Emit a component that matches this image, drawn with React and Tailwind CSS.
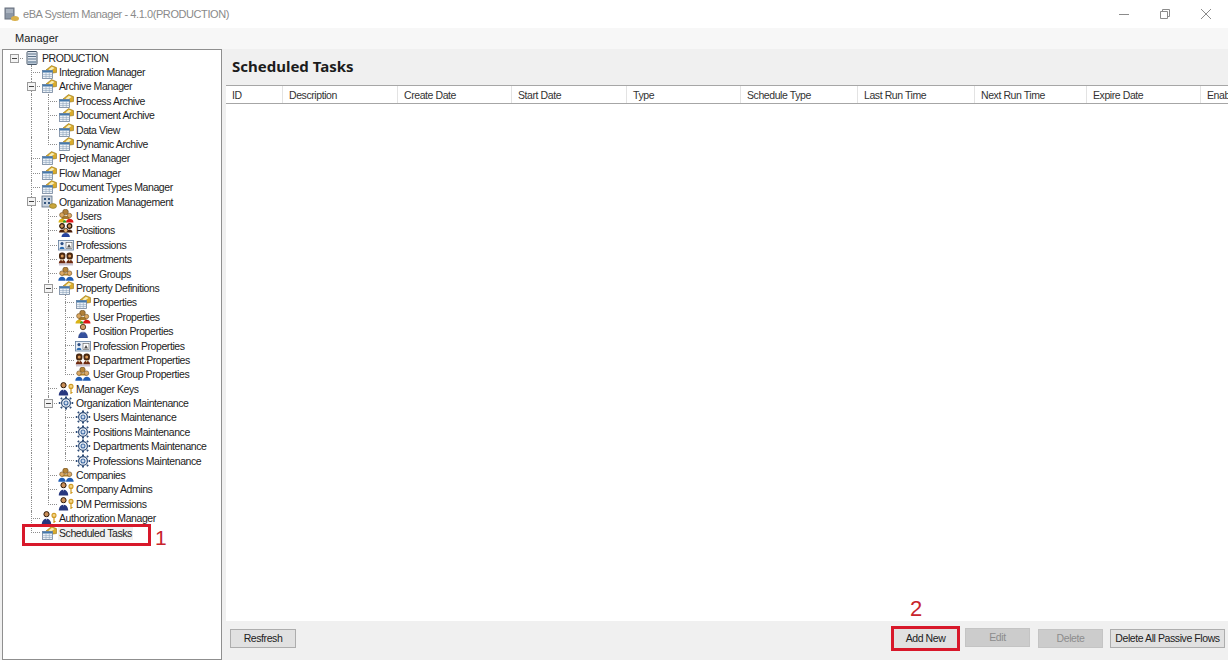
import React from "react";

const S = "[font-family:'Liberation_Sans',Arial,sans-serif]";

function Ico({ t }) {
  const base = { width: 16, height: 14, viewBox: "0 0 16 14" };
  if (t === "mgr")
    return (
      <svg {...base}>
        <path d="M5 5 L10.5 0.6 L15.5 2.6 L15.5 7.5 L12 8 Z" fill="#d9ab2c" stroke="#94741a" strokeWidth="0.6" />
        <path d="M7.5 4.4 L11 1.8 L13.6 3 L10 5.4Z" fill="#f8eeb8" />
        <rect x="1.5" y="5.5" width="10" height="8" fill="#eef3f8" stroke="#6f8299" strokeWidth="0.8" />
        <rect x="1.5" y="5.5" width="10" height="2" fill="#4579ab" />
        <path d="M1.5 9.6H11.5M1.5 11.5H11.5M5 7.5V13.5M8.3 7.5V13.5" stroke="#8fa6bd" strokeWidth="0.6" />
      </svg>
    );
  if (t === "server")
    return (
      <svg {...base}>
        <rect x="3" y="0.5" width="10" height="13" rx="1" fill="#dfe6ee" stroke="#49596b" />
        <path d="M4 3H12M4 5.5H12M4 8H12" stroke="#5a7088" />
        <rect x="4" y="10" width="8" height="2.5" fill="#8ea2b6" />
      </svg>
    );
  if (t === "org")
    return (
      <svg {...base}>
        <rect x="1" y="1" width="10" height="11" fill="#c9d3df" stroke="#5b6b80" strokeWidth="0.8" />
        <path d="M3 3h2v2H3zM7 3h2v2H7zM3 7h2v2H3zM7 7h2v2H7z" fill="#34567e" />
        <ellipse cx="12" cy="11" rx="3.5" ry="2.4" fill="#c9a53a" stroke="#86701f" strokeWidth="0.6" />
      </svg>
    );
  if (t === "users")
    return (
      <svg {...base}>
        <circle cx="7.5" cy="3" r="2.8" fill="#b07f38" stroke="#6a4a1c" strokeWidth="0.6" />
        <path d="M3.5 9c0-3 8-3 8 0v1h-8z" fill="#a67a2c" />
        <circle cx="4" cy="6" r="2.4" fill="#dca860" stroke="#6a4a1c" strokeWidth="0.6" />
        <path d="M0.5 13.5c0-5 7-5 7 0z" fill="#d9b316" />
        <circle cx="11.5" cy="6.5" r="2.2" fill="#dca860" stroke="#6a4a1c" strokeWidth="0.6" />
        <path d="M8 13.5c0-5 7.5-5 7.5 0z" fill="#de1616" />
        <path d="M5 13.5c0-3 3.4-3 3.4 0z" fill="#2f9a2a" />
      </svg>
    );
  if (t === "positions")
    return (
      <svg {...base}>
        <circle cx="4" cy="3" r="2.3" fill="#c88e58" stroke="#2c1808" strokeWidth="1.2" />
        <circle cx="11.5" cy="3" r="2.3" fill="#c88e58" stroke="#2c1808" strokeWidth="1.2" />
        <path d="M1 9.5c0-4 6-4 6 0zM8.5 9.5c0-4 6-4 6 0z" fill="#4a1e0a" />
        <circle cx="7.7" cy="7.4" r="2.1" fill="#e8b070" stroke="#2c1808" strokeWidth="0.7" />
        <path d="M3.5 14c0-5.2 8.4-5.2 8.4 0z" fill="#27439c" />
      </svg>
    );
  if (t === "prof")
    return (
      <svg {...base}>
        <rect x="0.5" y="2.5" width="15" height="9.5" fill="#e8eef6" stroke="#5f7a9c" strokeWidth="0.8" />
        <circle cx="4" cy="5.6" r="1.6" fill="#2d4f84" />
        <path d="M1.6 11c0-3 4.8-3 4.8 0z" fill="#2d6cb0" />
        <rect x="8" y="4.5" width="6" height="6" fill="#fff" stroke="#565656" strokeWidth="0.6" />
        <path d="M9 9.5L11 6l2 3.5z" fill="#4a4a4a" />
      </svg>
    );
  if (t === "dept")
    return (
      <svg {...base}>
        <rect x="1" y="0.5" width="6.4" height="7" rx="2.8" fill="#4a2810" />
        <rect x="8.5" y="0.5" width="6.4" height="7" rx="2.8" fill="#4a2810" />
        <circle cx="4.2" cy="4" r="1.5" fill="#d89858" />
        <circle cx="11.7" cy="4" r="1.5" fill="#d89858" />
        <path d="M0.8 11.5c0-5 6.8-5 6.8 0zM8.3 11.5c0-5 6.8-5 6.8 0z" fill="#6e2a10" />
        <path d="M3 7.5l1.2 2 1.2-2zM10.5 7.5l1.2 2 1.2-2z" fill="#e8d8a0" />
        <rect x="1" y="11.5" width="14" height="2" fill="#c9c3d2" />
      </svg>
    );
  if (t === "groups")
    return (
      <svg {...base}>
        <circle cx="7.5" cy="2.8" r="2.7" fill="#b58438" stroke="#6a4a1c" strokeWidth="0.6" />
        <path d="M3.5 8.5c0-3 8-3 8 0z" fill="#b6862a" />
        <circle cx="4" cy="6.2" r="2.3" fill="#dcaa66" stroke="#6a4a1c" strokeWidth="0.6" />
        <circle cx="11.5" cy="6.2" r="2.3" fill="#dcaa66" stroke="#6a4a1c" strokeWidth="0.6" />
        <path d="M0.3 13.7c0-5.4 7.4-5.4 7.4 0zM8 13.7c0-5.4 7.7-5.4 7.7 0z" fill="#1f5cb4" />
      </svg>
    );
  if (t === "person")
    return (
      <svg {...base}>
        <circle cx="8" cy="3" r="2.7" fill="#d09a64" stroke="#4a2c12" strokeWidth="0.8" />
        <path d="M3.5 14c0-8 9-8 9 0z" fill="#34509e" stroke="#27396e" strokeWidth="0.4" />
        <path d="M7 6.6h2l-1 3z" fill="#e8e8f0" />
      </svg>
    );
  if (t === "key")
    return (
      <svg {...base}>
        <circle cx="5.5" cy="3.2" r="2.6" fill="#c88e58" stroke="#2c1808" strokeWidth="1" />
        <path d="M0.8 13.5c0-7.6 9.4-7.6 9.4 0z" fill="#26377f" />
        <path d="M4.7 6.6h1.6l-.8 2.8z" fill="#e8e8f0" />
        <circle cx="13" cy="4.4" r="2" fill="#f2d488" stroke="#d09a20" strokeWidth="1.1" />
        <path d="M13 6.5V12M13 10.5h1.6" stroke="#d09a20" strokeWidth="1.2" fill="none" />
      </svg>
    );
  if (t === "gear")
    return (
      <svg {...base}>
        <path
          d="M8 2v-1.6M8 13.6v-1.6M2.4 7H.8M15.2 7h-1.6M4 3L2.9 1.9M13.1 12.1L12 11M4 11l-1.1 1.1M13.1 1.9L12 3"
          stroke="#2f4d78"
          strokeWidth="2"
        />
        <circle cx="8" cy="7" r="4.4" fill="#f4f7fb" stroke="#2f4d78" strokeWidth="1.2" />
        <circle cx="8" cy="7" r="2" fill="#cfdcee" stroke="#406ba3" strokeWidth="1.1" />
      </svg>
    );
  return null;
}

const rows = [
  { g: [], exp: true, i: "server", x: "PRODUCTION" },
  { g: ["t"], i: "mgr", x: "Integration Manager" },
  { g: ["m"], i: "mgr", x: "Archive Manager" },
  { g: ["v", "t"], i: "mgr", x: "Process Archive" },
  { g: ["v", "t"], i: "mgr", x: "Document Archive" },
  { g: ["v", "t"], i: "mgr", x: "Data View" },
  { g: ["v", "e"], i: "mgr", x: "Dynamic Archive" },
  { g: ["t"], i: "mgr", x: "Project Manager" },
  { g: ["t"], i: "mgr", x: "Flow Manager" },
  { g: ["t"], i: "mgr", x: "Document Types Manager" },
  { g: ["m"], i: "org", x: "Organization Management" },
  { g: ["v", "t"], i: "users", x: "Users" },
  { g: ["v", "t"], i: "positions", x: "Positions" },
  { g: ["v", "t"], i: "prof", x: "Professions" },
  { g: ["v", "t"], i: "dept", x: "Departments" },
  { g: ["v", "t"], i: "groups", x: "User Groups" },
  { g: ["v", "m"], i: "mgr", x: "Property Definitions" },
  { g: ["v", "v", "t"], i: "mgr", x: "Properties" },
  { g: ["v", "v", "t"], i: "users", x: "User Properties" },
  { g: ["v", "v", "t"], i: "person", x: "Position Properties" },
  { g: ["v", "v", "t"], i: "prof", x: "Profession Properties" },
  { g: ["v", "v", "t"], i: "dept", x: "Department Properties" },
  { g: ["v", "v", "e"], i: "groups", x: "User Group Properties" },
  { g: ["v", "t"], i: "key", x: "Manager Keys" },
  { g: ["v", "m"], i: "gear", x: "Organization Maintenance" },
  { g: ["v", "v", "t"], i: "gear", x: "Users Maintenance" },
  { g: ["v", "v", "t"], i: "gear", x: "Positions Maintenance" },
  { g: ["v", "v", "t"], i: "gear", x: "Departments Maintenance" },
  { g: ["v", "v", "e"], i: "gear", x: "Professions Maintenance" },
  { g: ["v", "t"], i: "groups", x: "Companies" },
  { g: ["v", "t"], i: "key", x: "Company Admins" },
  { g: ["v", "e"], i: "key", x: "DM Permissions" },
  { g: ["t"], i: "key", x: "Authorization Manager" },
  { g: ["e"], i: "mgr", x: "Scheduled Tasks", sel: true },
];

function Box() {
  return (
    <span className="absolute left-[4px] top-[3px] z-10 flex h-[9px] w-[9px] items-center justify-center border border-[#9a9a9a] bg-[#f4f4f4]">
      <span className="h-px w-[5px] bg-[#444]" />
    </span>
  );
}

function Guide({ k, root }) {
  const v = k === "v" || k === "t" || k === "m";
  const half = k === "e";
  const h = k === "t" || k === "e" || k === "m" || root;
  return (
    <span className="relative h-full w-[17px] shrink-0">
      {v && <span className="absolute bottom-0 left-[8px] top-0 border-l border-dotted border-[#8d8d8d]" />}
      {half && <span className="absolute left-[8px] top-0 h-[8px] border-l border-dotted border-[#8d8d8d]" />}
      {h && <span className="absolute left-[8px] top-[7px] w-[9px] border-t border-dotted border-[#8d8d8d]" />}
      {(k === "m" || root) && <Box />}
    </span>
  );
}

function Row({ r }) {
  return (
    <div className="flex h-[14.4px] items-center">
      {r.exp ? <Guide root /> : <span className="h-full w-[17px] shrink-0" />}
      {r.g.map((k, n) => (
        <Guide key={n} k={k} />
      ))}
      <span className="flex w-[17px] shrink-0 justify-center">
        <Ico t={r.i} />
      </span>
      <span
        className={`ml-[1px] whitespace-nowrap px-[1px] text-[10.5px] leading-[14px] tracking-[-0.42px] text-[#222] ${
          r.sel ? "bg-[#f0f0f0]" : ""
        }`}
      >
        {r.x}
      </span>
    </div>
  );
}

const cols = [
  ["ID", 57],
  ["Description", 115],
  ["Create Date", 114],
  ["Start Date", 115],
  ["Type", 114],
  ["Schedule Type", 117],
  ["Last Run Time", 117],
  ["Next Run Time", 112],
  ["Expire Date", 114],
  ["Enabled", 80],
];

function Btn({ children, w, off, cls = "" }) {
  return (
    <div
      style={{ width: w }}
      className={`flex h-[19px] shrink-0 items-center justify-center whitespace-nowrap border text-[10.5px] tracking-[-0.42px] ${
        off ? "border-[#c4c4c4] bg-[#cccccc] text-[#8c8c8c]" : "border-[#adadad] bg-[#e1e1e1] text-[#222]"
      } ${cls}`}
    >
      {children}
    </div>
  );
}

export default function App() {
  return (
    <div className={`relative flex h-[663px] w-[1228px] flex-col overflow-hidden bg-white ${S}`}>
      <div className="flex h-[28px] items-center pl-[4px]">
        <svg width="16" height="16" viewBox="0 0 16 16">
          <rect x="1" y="2" width="9" height="11" fill="#8c97a6" stroke="#68717e" />
          <path d="M2 4h7M2 6h7" stroke="#c9d0d9" />
          <ellipse cx="11" cy="12.5" rx="4" ry="2.5" fill="#d9b04a" />
        </svg>
        <span className="ml-[3px] text-[11px] tracking-[-0.42px] text-[#8a8a8a]">
          eBA System Manager - 4.1.0(PRODUCTION)
        </span>
        <div className="ml-auto flex items-center">
          <svg width="12" height="12" viewBox="0 0 12 12" className="mr-[29px]">
            <path d="M1 6.5H11" stroke="#8b8b8b" />
          </svg>
          <svg width="12" height="12" viewBox="0 0 12 12" className="mr-[29px]">
            <path d="M1.5 3.5h7v7h-7zM3.5 3.5v-2h7v7h-2" fill="none" stroke="#8b8b8b" />
          </svg>
          <svg width="12" height="12" viewBox="0 0 12 12" className="mr-[16px]">
            <path d="M1 1L11 11M11 1L1 11" stroke="#8b8b8b" />
          </svg>
        </div>
      </div>

      <div className="flex h-[21px] items-center bg-[#f7f7f7] pl-[15px] text-[11px] text-[#222]">Manager</div>

      <div className="flex h-[611px] bg-[#f0f0f0]">
        <div className="ml-[2px] h-full w-[220px] shrink-0 border border-[#8f8f8f] bg-white pl-[3px] pt-[0.5px]">
          {rows.map((r) => (
            <Row key={r.x} r={r} />
          ))}
        </div>

        <div className="ml-[4px] flex min-w-0 flex-1 flex-col">
          <div className="flex h-[36px] shrink-0 items-center pb-[2px] pl-[6px] text-[15px] font-bold text-[#1c1c1c] [font-family:'Noto_Sans',sans-serif]">
            Scheduled Tasks
          </div>
          <div className="min-h-0 flex-1 overflow-hidden bg-white">
            <div className="flex h-[19px] items-center overflow-hidden border-y border-[#a6a6a6] bg-white">
              {cols.map(([n, w]) => (
                <div
                  key={n}
                  style={{ width: w }}
                  className="flex h-full shrink-0 items-center whitespace-nowrap border-r border-[#e3e3e3] pl-[6px] pt-[2px] text-[10.5px] tracking-[-0.42px] text-[#333]"
                >
                  {n}
                </div>
              ))}
            </div>
          </div>
          <div className="flex h-[39px] shrink-0 items-start bg-[#f0f0f0] pl-[4px] pr-[3px] pt-[8px]">
            <Btn w={66}>Resfresh</Btn>
            <div className="ml-auto flex items-start">
              <div className="-mt-[3px] mr-[5px] border-[3px] border-[#d8182a]">
                <Btn w={63} cls="h-[18px] border-0">
                  Add New
                </Btn>
              </div>
              <Btn w={65} off cls="-mt-[1px]">
                Edit
              </Btn>
              <Btn w={65} off cls="ml-[8px]">
                Delete
              </Btn>
              <Btn w={115} cls="ml-[7px]">
                Delete All Passive Flows
              </Btn>
            </div>
          </div>
        </div>
      </div>

      <div className="absolute left-[22px] top-[524px] h-[22px] w-[129px] border-[3px] border-[#d8182a]" />
      <span className="absolute left-[155px] top-[525px] text-[21px] leading-[26px] text-[#c8242c]">1</span>
      <span className="absolute left-[910px] top-[596px] text-[22px] leading-[26px] text-[#c8242c]">2</span>
    </div>
  );
}
